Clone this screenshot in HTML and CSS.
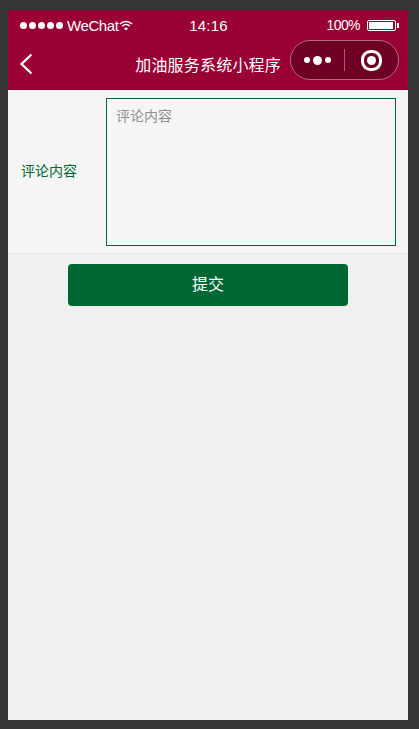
FILE: index.html
```html
<!DOCTYPE html>
<html lang="zh">
<head>
<meta charset="UTF-8">
<title>评论内容</title>
<link rel="stylesheet" href="styles.css">
</head>
<body>
<div class="phone">
  <div class="header">
    <div class="status-bar">
      <div class="status-left">
        <span class="signal"><i></i><i></i><i></i><i></i><i></i></span>
        <span class="carrier">WeChat</span>
        <svg class="wifi" width="14" height="11" viewBox="0 0 14 11">
          <path d="M1 4 A8.5 8.5 0 0 1 13 4" fill="none" stroke="#fff" stroke-width="1.5"/>
          <path d="M3.2 6.2 A5.3 5.3 0 0 1 10.8 6.2" fill="none" stroke="#fff" stroke-width="1.5"/>
          <path d="M5 8.4 A2.8 2.8 0 0 1 9 8.4 L7 10.4 Z" fill="#fff"/>
        </svg>
      </div>
      <div class="status-time">14:16</div>
      <div class="status-right">
        <span class="percent">100%</span>
        <span class="battery"><span class="battery-level"></span></span>
        <span class="battery-tip"></span>
      </div>
    </div>
    <div class="nav-bar">
      <svg class="back" width="14" height="22" viewBox="0 0 14 22">
        <path d="M12.5 1.5 L2.5 11 L12.5 20.5" fill="none" stroke="#fff" stroke-width="2.2"/>
      </svg>
      <div class="nav-title">加油服务系统小程序</div>
      <div class="capsule">
        <div class="capsule-more"><i></i><i class="big"></i><i></i></div>
        <div class="capsule-line"></div>
        <div class="capsule-close"><span class="ring"><span class="dot"></span></span></div>
      </div>
    </div>
  </div>
  <div class="form-row">
    <label class="form-label">评论内容</label>
    <textarea class="form-input" placeholder="评论内容"></textarea>
  </div>
  <div class="actions">
    <button class="submit">提交</button>
  </div>
</div>
</body>
</html>
```

FILE: styles.css
```css
* {
  box-sizing: border-box;
  font-family: "Liberation Sans", "Noto Sans CJK SC", sans-serif;
}
html, body {
  height: 100%;
}
body {
  margin: 0;
  padding: 10px 11px 9px 8px;
  background-color: #353535;
  overflow: hidden;
}
.phone {
  height: 100%;
  display: flex;
  flex-direction: column;
  background-color: #f0f0f0;
}

.header {
  height: 80px;
  padding: 0 9px 0 12px;
  background-color: #990033;
  color: #fff;
}
.status-bar {
  height: 30px;
  display: flex;
  align-items: center;
  justify-content: space-between;
  font-size: 15px;
}
.status-left, .status-right {
  width: 130px;
  display: flex;
  align-items: center;
}
.status-right {
  justify-content: flex-end;
  padding-right: 0;
}
.status-time {
  font-size: 15px;
  letter-spacing: 0.2px;
  margin-left: -2px;
}
.signal {
  display: flex;
  gap: 2px;
  margin-right: 4px;
}
.signal i {
  width: 7px;
  height: 7px;
  border-radius: 50%;
  background-color: #fff;
}
.carrier {
  letter-spacing: -0.4px;
}
.percent {
  margin-right: 7px;
  font-size: 14px;
  letter-spacing: -0.6px;
}
.battery {
  width: 29px;
  height: 11px;
  padding: 1px;
  border: 1px solid #fff;
  border-radius: 2px;
}
.battery-level {
  display: block;
  width: 24px;
  height: 7px;
  background-color: #fff;
}
.battery-tip {
  width: 2px;
  height: 5px;
  margin-left: 1px;
  background-color: #fff;
}

.nav-bar {
  height: 50px;
  display: flex;
  align-items: center;
}
.back {
  flex: none;
  margin: 0 0 2px -1px;
}
.nav-title {
  flex: 1;
  padding: 0 9px 2px 0;
  text-align: right;
  font-size: 16px;
  letter-spacing: 0.2px;
  white-space: nowrap;
}
.capsule {
  flex: none;
  width: 109px;
  height: 40px;
  margin-bottom: 10px;
  display: flex;
  align-items: center;
  border: 1px solid #b66a86;
  border-radius: 20px;
  background-color: #6e0024;
}
.capsule-more {
  width: 53px;
  display: flex;
  align-items: center;
  justify-content: center;
  gap: 3px;
}
.capsule-more i {
  width: 6px;
  height: 6px;
  border-radius: 50%;
  background-color: #fff;
}
.capsule-more i.big {
  width: 9px;
  height: 9px;
}
.capsule-line {
  width: 1px;
  height: 22px;
  background-color: #a65a78;
}
.capsule-close {
  flex: 1;
  display: flex;
  justify-content: center;
  padding-right: 1px;
}
.ring {
  width: 21px;
  height: 21px;
  display: flex;
  align-items: center;
  justify-content: center;
  border: 3px solid #fff;
  border-radius: 45%;
}
.dot {
  width: 9px;
  height: 9px;
  border-radius: 50%;
  background-color: #fff;
}

.form-row {
  height: 164px;
  padding: 8px 12px 7px 13px;
  display: flex;
  align-items: center;
  background-color: #f5f5f5;
  border-bottom: 1px solid #e4e4e4;
}
.form-label {
  width: 85px;
  flex: none;
  padding-bottom: 4px;
  font-size: 14px;
  color: #006633;
}
.form-input {
  flex: 1;
  height: 148px;
  padding: 6px 9px;
  border: 1px solid #006633;
  border-radius: 0;
  outline: none;
  resize: none;
  background-color: #f5f5f5;
  font-size: 14px;
}
.form-input::placeholder {
  color: #8f8f8f;
}

.actions {
  padding-top: 10px;
  display: flex;
  justify-content: center;
}
.submit {
  width: 280px;
  height: 42px;
  padding-bottom: 5px;
  border: none;
  border-radius: 4px;
  background-color: #006633;
  color: #fff;
  font-size: 16px;
}
```
